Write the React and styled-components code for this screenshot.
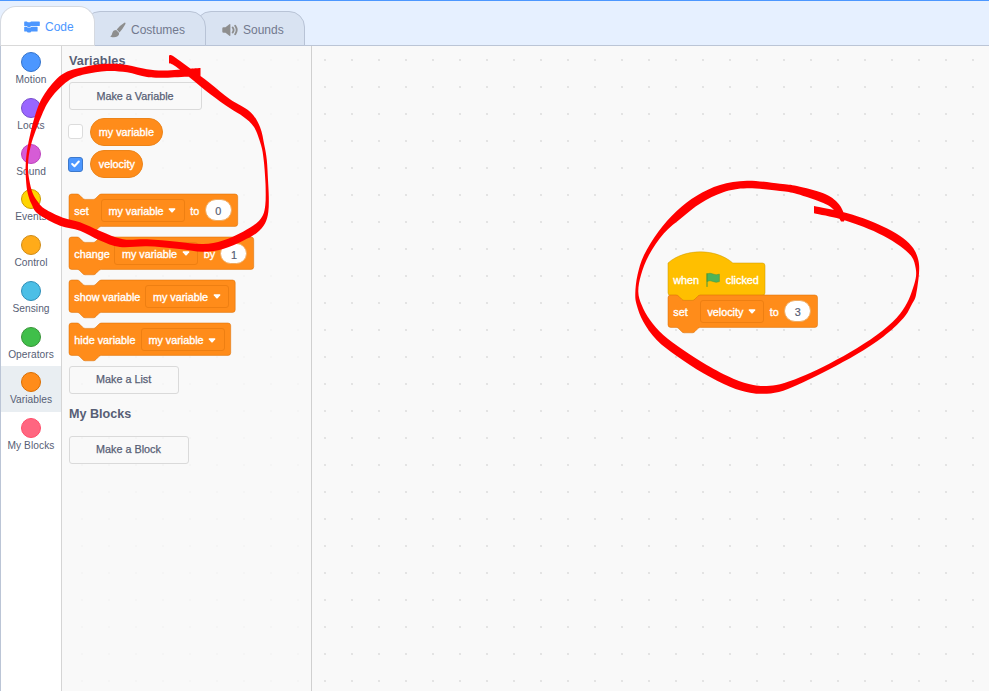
import React from "react";
import styled, { createGlobalStyle } from "styled-components";

const SCALE = 0.675;

const Global = createGlobalStyle`
  * { box-sizing: border-box; }
  body { margin: 0; overflow: hidden; font-family: "Liberation Sans", Arial, sans-serif; color: #575e75; }
`;

const Editor = styled.div`
  position: relative;
  display: flex;
  flex-direction: column;
  width: 989px;
  height: 691px;
  overflow: hidden;
  background: #e6f0ff;
  border-top: 1px solid #4c97ff;
`;

const TabBar = styled.nav`
  display: flex;
  align-items: flex-end;
  height: 45px;
  flex: none;
  border-bottom: 1px solid #bbc5d6;
`;

const Tab = styled.div`
  position: relative;
  z-index: ${(p) => p.$z};
  display: flex;
  align-items: center;
  width: ${(p) => p.$w}px;
  height: ${(p) => (p.$active ? 40 : 35)}px;
  margin-left: ${(p) => (p.$active ? 0 : -11)}px;
  margin-bottom: -1px;
  padding: 2px 0 0 ${(p) => p.$pad}px;
  gap: ${(p) => p.$gap}px;
  border: 1px solid ${(p) => (p.$active ? "#d5d9e0" : "#b8c3d6")};
  border-bottom-color: ${(p) => (p.$active ? "#d9d9d9" : "#b8c3d6")};
  border-radius: 16px 16px 0 0;
  background: ${(p) => (p.$active ? "#fff" : "#d9e3f2")};
  color: ${(p) => (p.$active ? "#4c97ff" : "#72798e")};
  font-size: 12px;
  svg { flex: none; display: block; }
`;

const Main = styled.div`
  display: flex;
  flex: 1;
  min-height: 0;
  border-left: 1px solid #bbc5d6;
  background-color: #f9f9f9;
  background-image: radial-gradient(circle at 1px 1px, #e3e3e3 0.7px, rgba(227, 227, 227, 0) 1.4px);
  background-size: 27px 27px;
  background-position: 26px 13px;
`;

const Categories = styled.aside`
  width: 61px;
  flex: none;
  background: #fff;
  border-right: 1px solid #d5d5d5;
`;

const Category = styled.div`
  display: flex;
  flex-direction: column;
  align-items: center;
  height: 45.75px;
  padding-top: 6px;
  font-size: 10.2px;
  line-height: 16px;
  letter-spacing: 0.05px;
  white-space: nowrap;
  background: ${(p) => (p.$selected ? "#e9eef2" : "transparent")};
`;

const Dot = styled.span`
  width: 20px;
  height: 20px;
  flex: none;
  border-radius: 50%;
  background: ${(p) => p.$fill};
  border: 1px solid ${(p) => p.$edge};
`;

const Flyout = styled.section`
  display: flex;
  flex-direction: column;
  align-items: flex-start;
  width: 250px;
  flex: none;
  padding: 7px 0 0 6.5px;
  background: rgba(249, 249, 249, 0.8);
  border-right: 1px solid #d0d0d0;
`;

const Heading = styled.h2`
  margin: ${(p) => p.$mt || 0}px 0 0 0.5px;
  height: 16px;
  font-size: 12.6px;
  line-height: 16px;
  font-weight: 700;
  letter-spacing: ${(p) => p.$track || 0}px;
`;

const FlyoutButton = styled.div`
  display: flex;
  align-items: center;
  justify-content: center;
  width: ${(p) => p.$w}px;
  height: 28px;
  margin-top: ${(p) => p.$mt}px;
  padding-bottom: 1px;
  border: 1px solid #dadada;
  border-radius: 3px;
  font-size: 10.8px;
  -webkit-text-stroke: 0.25px #575e75;
`;

const Monitor = styled.div`
  display: flex;
  align-items: center;
  height: 28px;
  margin-top: ${(p) => p.$mt}px;
  margin-left: -0.2px;
  gap: 7px;
`;

const Checkbox = styled.span`
  display: flex;
  align-items: center;
  justify-content: center;
  width: 15px;
  height: 15px;
  border-radius: 3px;
  border: 1px solid ${(p) => (p.$on ? "#3d79cc" : "#dcdcdc")};
  background: ${(p) => (p.$on ? "#4c97ff" : "#fff")};
`;

const Reporter = styled.span`
  height: 28px;
  padding: 0 7.5px;
  line-height: 27px;
  border: 1px solid #ec841a;
  border-radius: 14px;
  background: #ff8c1a;
  color: #fff;
  font-size: 10.8px;
  -webkit-text-stroke: 0.35px #fff;
`;

const BlockBox = styled.div`
  position: relative;
  display: flex;
  align-items: center;
  width: ${(p) => p.$w}px;
  height: 32.4px;
  margin-top: ${(p) => p.$mt || 0}px;
  padding-left: 5.8px;
  color: #fff;
  font-size: 10.8px;
  white-space: nowrap;
  -webkit-text-stroke: 0.35px #fff;
`;

const BlockShape = styled.svg`
  position: absolute;
  left: 0;
  top: 0;
  overflow: visible;
`;

const Word = styled.span`
  position: relative;
  flex: none;
  width: ${(p) => p.$w}px;
  padding-top: ${(p) => p.$drop || 1}px;
`;

const Select = styled.span`
  position: relative;
  display: flex;
  align-items: center;
  justify-content: space-between;
  flex: none;
  width: ${(p) => p.$w}px;
  height: 22.6px;
  margin-right: 5.5px;
  padding: 1px 7.5px 0 6.6px;
  border: 1px solid #ee7f12;
  border-radius: 3px;
`;

const NumberField = styled.span`
  position: relative;
  flex: none;
  width: 27px;
  height: 21.6px;
  border: 1px solid #efab62;
  border-radius: 11px;
  background: #fff;
  color: #575e75;
  line-height: 22px;
  text-align: center;
  -webkit-text-stroke: 0.2px #575e75;
`;

const Script = styled.div`
  position: absolute;
  left: 667.5px;
  top: 261.7px;
`;

const FlagSlot = styled.span`
  position: relative;
  display: flex;
  flex: none;
  width: 20px;
  padding-top: 2px;
`;

const Ink = styled.svg`
  position: absolute;
  left: 0;
  top: -1px;
  pointer-events: none;
`;

const NOTCH = "c 2,0 3,1 4,2 l 4,4 c 1,1 2,2 4,2 h 12 c 2,0 3,-1 4,-2 l 4,-4 c 1,-1 2,-2 4,-2";
const FOOT = "H 48 c -2,0 -3,1 -4,2 l -4,4 c -1,1 -2,2 -4,2 h -12 c -2,0 -3,-1 -4,-2 l -4,-4 c -1,-1 -2,-2 -4,-2 H 4 a 4,4 0 0,1 -4,-4 z";

function Shape({ width, hat }) {
  const w = width / SCALE;
  const top = hat
    ? "m 0,0 c 25,-22 71,-22 96,0"
    : `m 0,4 A 4,4 0 0,1 4,0 H 12 ${NOTCH}`;
  return (
    <BlockShape width={width} height="38">
      <path
        transform={`scale(${SCALE})`}
        d={`${top} H ${w - 4} a 4,4 0 0,1 4,4 v 40 a 4,4 0 0,1 -4,4 ${FOOT}`}
        fill={hat ? "#ffbf00" : "#ff8c1a"}
        stroke={hat ? "#cc9900" : "#db6e00"}
        strokeOpacity="0.75"
      />
    </BlockShape>
  );
}

const Caret = () => (
  <svg width="8" height="5" viewBox="0 0 8 5">
    <path d="M1.2.3h5.6q.8.2.4.9L4.7 4.2q-.7.6-1.4 0L.8 1.2Q.4.5 1.2.3z" fill="#fff" />
  </svg>
);

function Block({ width, mt, label, labelWidth, variable, selectWidth, joiner, joinerWidth, value }) {
  return (
    <BlockBox $w={width} $mt={mt}>
      <Shape width={width} />
      <Word $w={labelWidth}>{label}</Word>
      <Select $w={selectWidth}>{variable}<Caret /></Select>
      {joiner && <Word $w={joinerWidth}>{joiner}</Word>}
      {value && <NumberField>{value}</NumberField>}
    </BlockBox>
  );
}

const CATEGORIES = [
  ["Motion", "#4c97ff", "#3373cc"],
  ["Looks", "#9966ff", "#774dcb"],
  ["Sound", "#d65cd6", "#bd42bd"],
  ["Events", "#ffd500", "#cc9900"],
  ["Control", "#ffab19", "#cf8b17"],
  ["Sensing", "#4cbfe6", "#2e8eb8"],
  ["Operators", "#40bf4a", "#389438"],
  ["Variables", "#ff8c1a", "#db6e00"],
  ["My Blocks", "#ff6680", "#ff4d6a"],
];

const curve = (pts) => {
  let d = "";
  for (let i = 0; i < pts.length - 1; i++) {
    const a = pts[Math.max(0, i - 1)], b = pts[i], c = pts[i + 1], e = pts[Math.min(pts.length - 1, i + 2)];
    d += `C${b[0] + (c[0] - a[0]) / 6} ${b[1] + (c[1] - a[1]) / 6} ${c[0] - (e[0] - b[0]) / 6} ${c[1] - (e[1] - b[1]) / 6} ${c[0]} ${c[1]}`;
  }
  return d;
};
const brush = (outer, inner) => {
  const back = [...inner].reverse();
  return `M${outer[0]}${curve(outer)}L${back[0]}${curve(back)}Z`;
};

const STROKES = [
  brush(
    [[200.5,68],[190,68.7],[165,70.5],[147,69.3],[127,65],[107,63.8],[85,66.8],[62,74.5],[44.5,94],[35.5,114],[28,145],[25.7,165],[26,180],[27.7,193.3],[31.5,204],[38.3,214],[60,225.7],[80,230.7],[100,240.5],[120,247],[147,246.3],[177,248.7],[203,251.7],[223,249],[243,240.7],[256.7,233],[265,223.5],[268.3,212],[268.8,197],[268,180],[266.8,160],[264.3,145],[260,127],[250,111.7],[230,99.3],[210,83.3],[190,68.3],[173,56],[169,55.5]],
    [[200.5,76],[190,76.5],[165,77.7],[147,77],[127,72.3],[107,71],[85,74.3],[68,81],[51,98],[41,117],[31,145],[28,165],[29.3,180],[32.7,193.3],[38,202],[45,209],[63,217.7],[80,222.3],[100,231],[123,239.3],[147,239.3],[177,241.7],[203,244],[223,240.5],[243,231.7],[256.7,223],[263,215],[265.3,205],[265.7,193],[265.3,180],[263.7,160],[261,145],[254,127],[243.3,116.7],[230,108.3],[210,94],[190,77.7],[175,66],[169,63.3]]
  ),
  brush(
    [[841,221.5],[838,216],[833.3,209.3],[823.3,203],[797,194],[780,191],[747,188.3],[723.3,192.3],[700.7,203.3],[681.7,217.7],[664,233.3],[649,255],[641,275],[638.3,291.7],[641.7,305],[650,320],[663.3,335],[683.3,350],[706.7,365],[733.3,378.7],[753.3,385],[766.7,386],[780,384.3],[800,377.3],[823.3,366.7],[850,352.3],[876.7,335],[896.7,317.7],[907,303],[912,291],[915.7,278.3],[915.7,268.3],[911.7,256.7],[900,246],[883.3,235.7],[863.3,226.7],[840,219],[814,213.3]],
    [[844,221.5],[843.3,212],[836.7,201.7],[823.3,193.3],[797,186],[780,183.7],[747,180.7],[720,185],[696.7,195.7],[676.7,211],[658.3,231.7],[644,255],[637.5,275],[635.3,293.3],[636.7,305],[643.3,321.7],[656.7,340],[676.7,356],[703.3,373.3],[730,386.7],[750,392.7],[766.7,393.7],[783.3,390.7],[803.3,382.3],[830,369],[856.7,354.3],[883.3,336.7],[903.3,318.3],[912,304],[916,295],[919,273.3],[918.3,260],[913.3,248.3],[903.3,238.3],[886.7,228.3],[863.3,218.3],[841.7,211.7],[814,206]]
  ),
];

const CodeIcon = () => (
  <svg width="16" height="12" viewBox="0 0 16 12" fill="#4c97ff">
    <path d="M.8.4h2l1 .9h2.3L7 .4h8.2q.6 0 .6.6v3.4q0 .6-.6.6H7l-.9.9H3.8L2.8 5h-2q-.6 0-.6-.6V1Q.2.4.8.4z" />
    <path d="M.8 5.700h1.700l1 .9h3l1-.9h5.500q.6 0 .6.600V10q0 .6-.6.6H7.300l-.9.9H3.700l-.9-.9h-2q-.6 0-.6-.6V6.300q0-.6.6-.6z" />
  </svg>
);
const BrushIcon = () => (
  <svg width="16" height="16" viewBox="0 0 16 16" fill="#8e8e8e">
    <path d="M15.300.7q.5.500 0 1.600Q12.800 6.800 9.500 10.500L6.700 7.500Q10.300 3.200 14 1q.9-.7 1.300-.3z" />
    <path d="M6.200 8 9.100 11Q9.600 13.300 7.200 14.600 4.500 16 .6 14.800c-.4-.1-.4-.5 0-.6Q2 13.500 2.200 11.300 2.900 8.100 6.200 8z" />
  </svg>
);
const SoundIcon = () => (
  <svg width="16" height="14" viewBox="0 0 16 14" fill="#8e8e8e">
    <path d="M.3 5.500q0-1.200 1.200-1.200h2L7.400 1.200q1-.7 1 .5v10.600q0 1.200-1 .5L3.500 9.700h-2Q.3 9.700.3 8.500z" />
    <path d="M10.700 4.500q1.800 2.500 0 5M13.200 2.800q3 4.200 0 8.400" fill="none" stroke="#8e8e8e" strokeWidth="1.900" strokeLinecap="round" />
  </svg>
);
const Flag = () => (
  <svg width="15" height="16" viewBox="0 0 15 16">
    <path d="M1 2q3-1.600 6 0t6.400.1v7.500q-3.300 1.500-6.400-.1T1 9.600z" fill="#4cb35a" stroke="#45993d" strokeWidth=".5" />
    <path d="M1 1.500v13" stroke="#45993d" strokeWidth="1" strokeLinecap="round" />
  </svg>
);

export default function App() {
  return (
    <Editor>
      <Global />
      <TabBar>
        <Tab $active $z={3} $w={95} $pad={23} $gap={5}><CodeIcon />Code</Tab>
        <Tab $z={2} $w={122} $pad={25} $gap={5}><BrushIcon />Costumes</Tab>
        <Tab $z={1} $w={110} $pad={26} $gap={5}><SoundIcon />Sounds</Tab>
      </TabBar>
      <Main>
        <Categories>
          {CATEGORIES.map(([name, fill, edge]) => (
            <Category key={name} $selected={name === "Variables"}>
              <Dot $fill={fill} $edge={edge} />
              {name}
            </Category>
          ))}
        </Categories>
        <Flyout>
          <Heading $track={0.15}>Variables</Heading>
          <FlyoutButton $w={133} $mt={13.3}>Make a Variable</FlyoutButton>
          <Monitor $mt={7.4}><Checkbox /><Reporter>my variable</Reporter></Monitor>
          <Monitor $mt={4.6}>
            <Checkbox $on>
              <svg width="9" height="8" viewBox="0 0 9 8"><path d="M1.200 4 3.500 6.200 7.800 1.500" fill="none" stroke="#fff" strokeWidth="2" strokeLinecap="round" strokeLinejoin="round" /></svg>
            </Checkbox>
            <Reporter>velocity</Reporter>
          </Monitor>
          <Block mt={15.8} width={168.7} label="set" labelWidth={26.5} variable="my variable" selectWidth={84} joiner="to" joinerWidth={14.5} value="0" />
          <Block mt={10.7} width={184.7} label="change" labelWidth={40} variable="my variable" selectWidth={84} joiner="by" joinerWidth={16.7} value="1" />
          <Block mt={10.7} width={166.2} label="show variable" labelWidth={71} variable="my variable" selectWidth={84} />
          <Block mt={10.7} width={161.7} label="hide variable" labelWidth={66.5} variable="my variable" selectWidth={84} />
          <FlyoutButton $w={110.3} $mt={10.2}>Make a List</FlyoutButton>
          <Heading $mt={12.6}>My Blocks</Heading>
          <FlyoutButton $w={120} $mt={13.5}>Make a Block</FlyoutButton>
        </Flyout>
      </Main>
      <Script>
        <BlockBox $w={97}>
          <Shape width={97} hat />
          <Word $w={32.5} $drop={3}>when</Word>
          <FlagSlot><Flag /></FlagSlot>
          <Word $w={34} $drop={3}>clicked</Word>
        </BlockBox>
        <Block width={149.5} label="set" labelWidth={26.5} variable="velocity" selectWidth={64.5} joiner="to" joinerWidth={14.5} value="3" />
      </Script>
      <Ink width="989" height="691">
        {STROKES.map((d, i) => <path key={i} d={d} fill="#ff0000" />)}
      </Ink>
    </Editor>
  );
}
